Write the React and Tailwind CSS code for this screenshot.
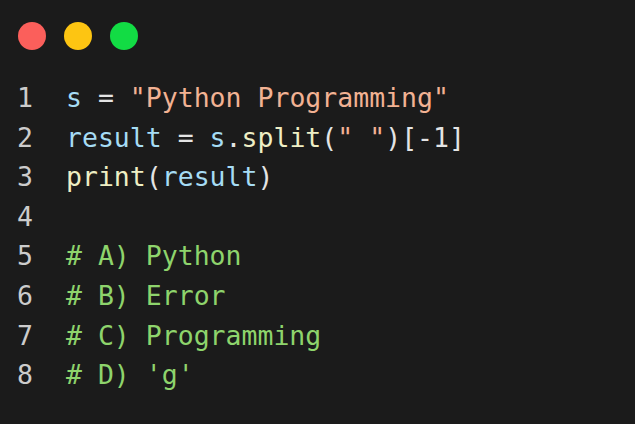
import React from 'react';

const V = 'text-[#a6dcf4]';
const W = 'text-[#e4e4e4]';
const S = 'text-[#f2b293]';
const F = 'text-[#eeeec4]';
const C = 'text-[#8ed46c]';

const lines = [
  [[V, 's'], [W, ' = '], [S, '"Python Programming"']],
  [[V, 'result'], [W, ' = '], [V, 's'], [W, '.'], [F, 'split'], [W, '('], [S, '" "'], [W, ')[-1]']],
  [[F, 'print'], [W, '('], [V, 'result'], [W, ')']],
  [],
  [[C, '# A) Python']],
  [[C, '# B) Error']],
  [[C, '# C) Programming']],
  [[C, "# D) 'g'"]],
];

export default function App() {
  return (
    <div className="w-[635px] h-[424px] bg-[#1b1b1b] overflow-hidden font-['DejaVu_Sans_Mono',monospace]">
      <div className="flex gap-[18px] pl-[18px] pt-[22px]">
        <div className="w-[28px] h-[28px] rounded-full bg-[#fb5f5b]" />
        <div className="w-[28px] h-[28px] rounded-full bg-[#fdc512]" />
        <div className="w-[28px] h-[28px] rounded-full bg-[#12dc44]" />
      </div>
      <div className="pt-[28px] text-[26.5px] leading-[39.6px]">
        {lines.map((toks, i) => (
          <div key={i} className="flex">
            <div className="w-[66px] pl-[17px] shrink-0 text-[#cccccc]">{i + 1}</div>
            <div className="whitespace-pre">
              {toks.map(([c, t], j) => (
                <span key={j} className={c}>{t}</span>
              ))}
            </div>
          </div>
        ))}
      </div>
    </div>
  );
}
